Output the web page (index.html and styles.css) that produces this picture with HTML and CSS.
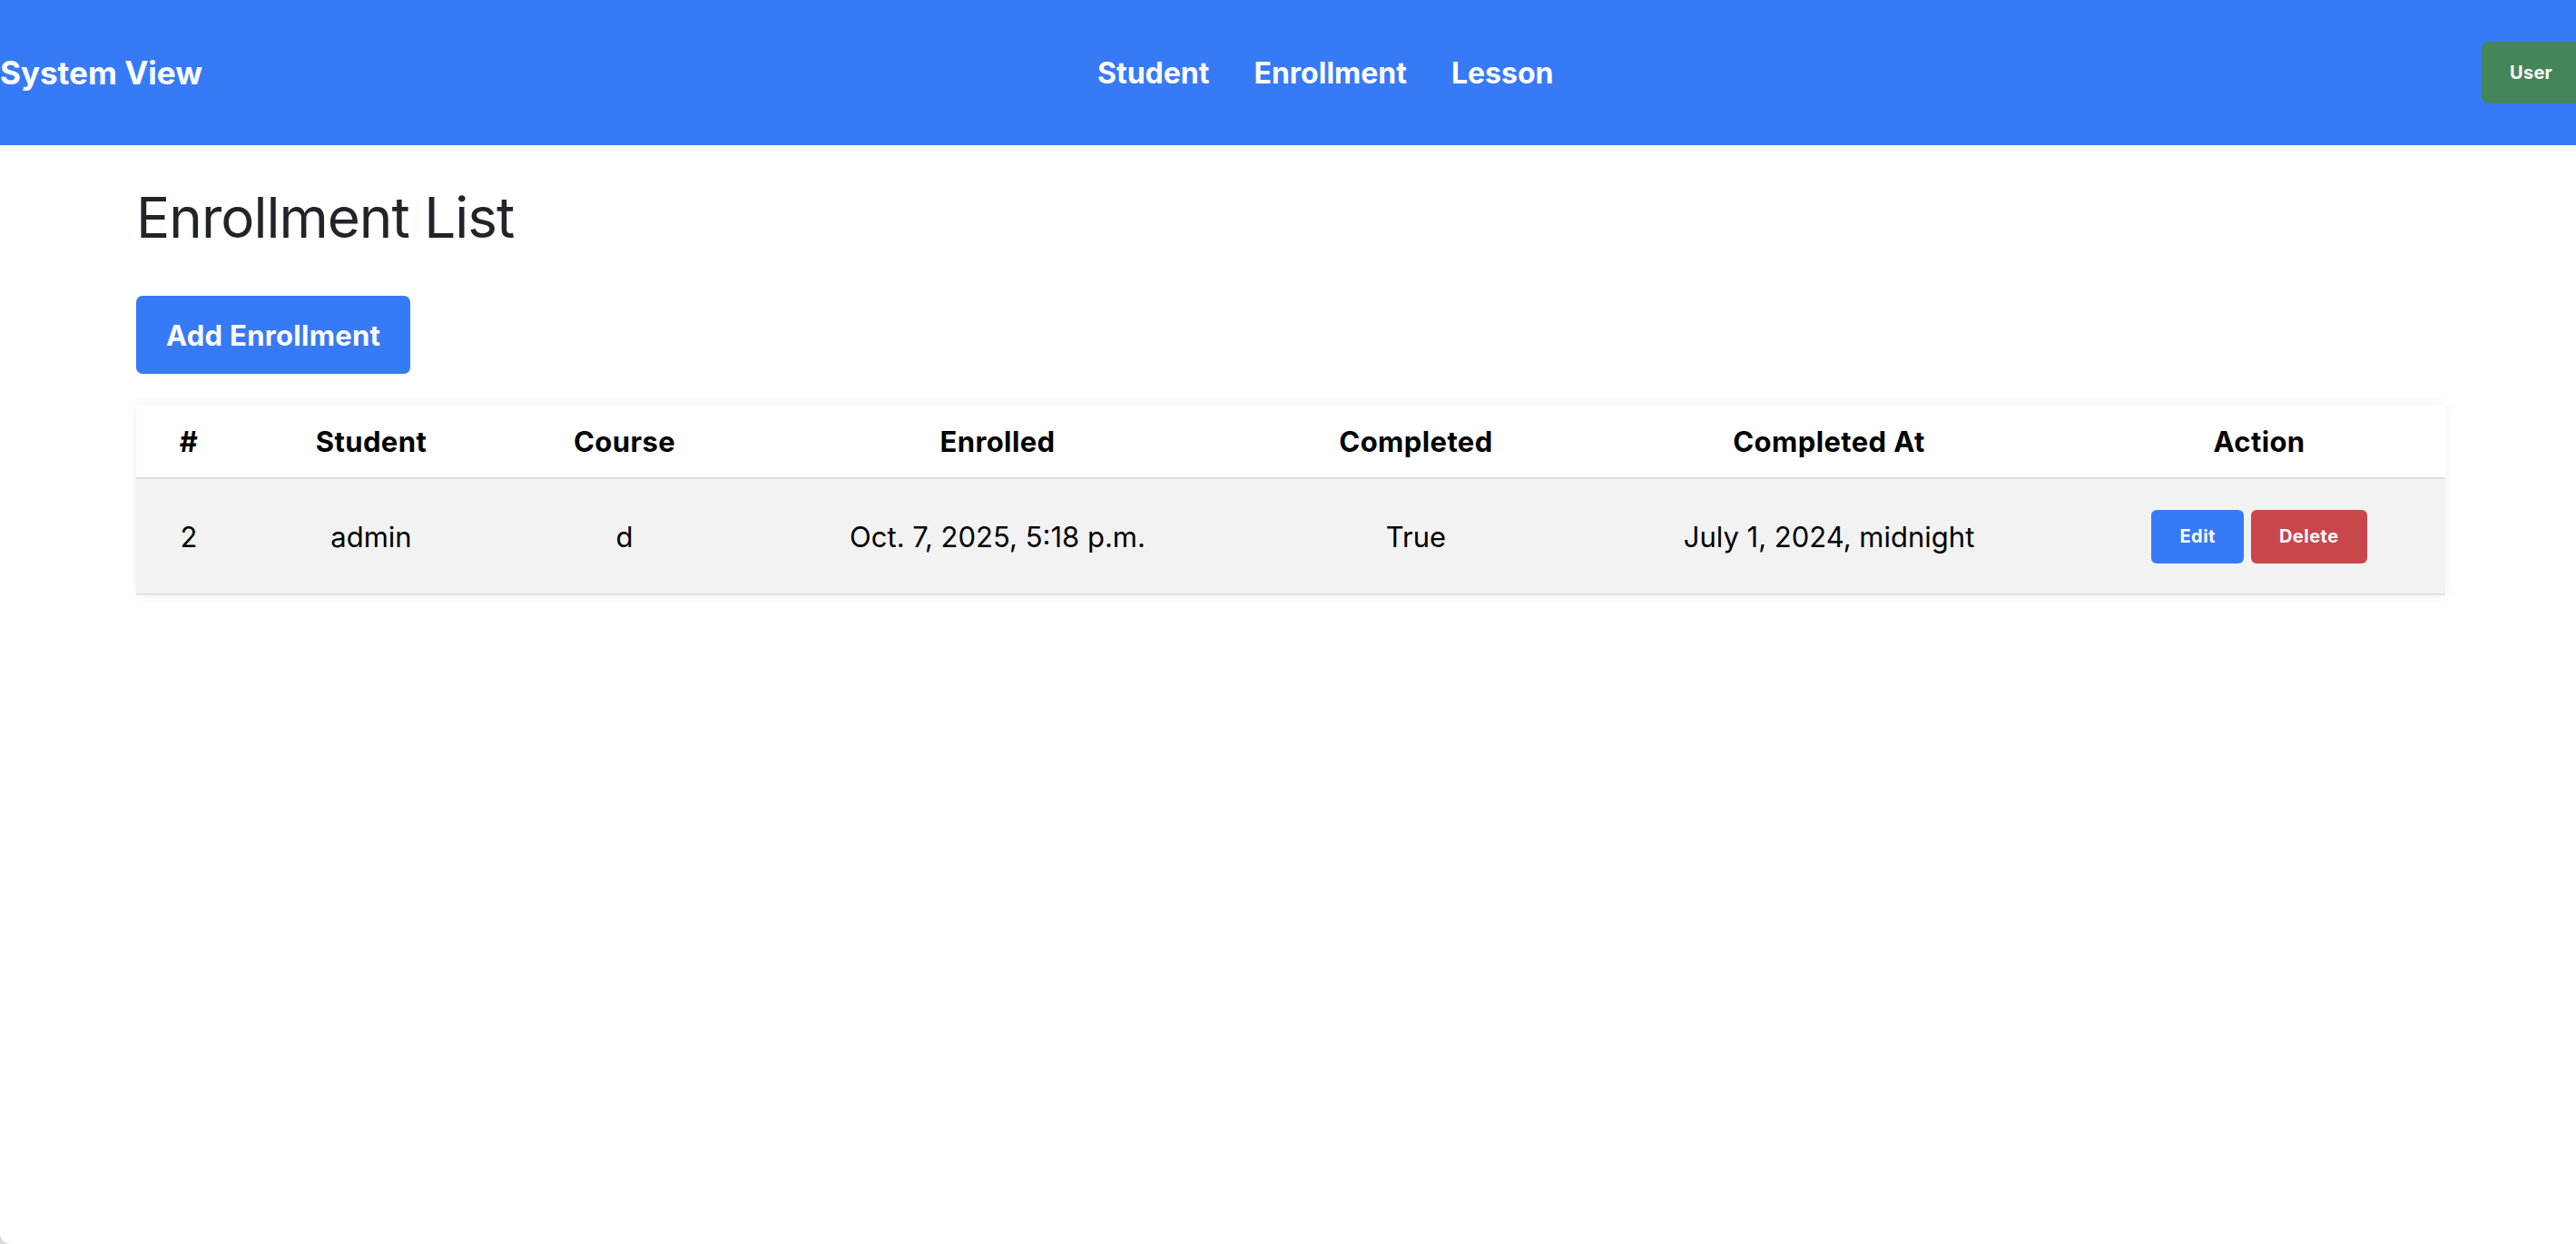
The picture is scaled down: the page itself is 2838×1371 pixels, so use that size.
FILE: index.html
```html
<!DOCTYPE html>
<html lang="en">
<head>
<meta charset="utf-8">
<title>Enrollment List</title>
<link rel="stylesheet" href="styles.css">
</head>
<body>
<header class="topbar">
  <div class="brand">System View</div>
  <nav class="nav">
    <a class="nav-link" href="#">Student</a>
    <a class="nav-link" href="#">Enrollment</a>
    <a class="nav-link" href="#">Lesson</a>
  </nav>
  <button class="user-btn">User</button>
</header>
<main class="content">
  <h1 class="page-title">Enrollment List</h1>
  <button class="btn-add">Add Enrollment</button>
  <table class="list-table">
    <colgroup>
      <col class="c-id"><col class="c-student"><col class="c-course"><col class="c-enrolled"><col class="c-completed"><col class="c-completed-at"><col class="c-action">
    </colgroup>
    <thead>
      <tr>
        <th>#</th><th>Student</th><th>Course</th><th>Enrolled</th><th>Completed</th><th>Completed At</th><th>Action</th>
      </tr>
    </thead>
    <tbody>
      <tr>
        <td>2</td><td>admin</td><td>d</td><td>Oct. 7, 2025, 5:18 p.m.</td><td>True</td><td>July 1, 2024, midnight</td>
        <td><div class="actions"><button class="btn-sm btn-edit">Edit</button><button class="btn-sm btn-delete">Delete</button></div></td>
      </tr>
    </tbody>
  </table>
</main>
</body>
</html>
```

FILE: styles.css
```css
html {
  background: #d9d9d9;
}
body {
  margin: 0;
  min-height: 1371px;
  background: #ffffff;
  font-family: Inter, "Liberation Sans", sans-serif;
  color: #000;
  border-bottom-left-radius: 12px;
  overflow: hidden;
}
.topbar {
  height: 160px;
  background: #377af6;
  display: grid;
  grid-template-columns: 1209px auto 1fr;
  align-items: center;
}
.brand {
  color: #fff;
  font-weight: 700;
  font-size: 35px;
  letter-spacing: 0;
}
.nav {
  display: flex;
  gap: 49px;
}
.nav-link {
  color: #fff;
  font-weight: 700;
  font-size: 32px;
  text-decoration: none;
  letter-spacing: 0;
}
.user-btn {
  justify-self: end;
  margin-right: -5px;
  width: 109px;
  height: 68px;
  background: #45855a;
  color: #fff;
  border: none;
  border-radius: 8px;
  font-family: inherit;
  font-weight: 700;
  font-size: 20px;
  letter-spacing: 0.3px;
  padding: 0;
}
.content {
  padding: 43px 145px 0 150px;
}
.page-title {
  margin: 0;
  font-size: 62px;
  font-weight: 400;
  line-height: 1.2;
  color: #212529;
  letter-spacing: -1px;
}
.btn-add {
  margin-top: 49px;
  display: block;
  height: 86px;
  padding: 0 33px;
  background: #377af6;
  color: #fff;
  border: none;
  border-radius: 7px;
  font-family: inherit;
  font-weight: 700;
  font-size: 31px;
  letter-spacing: 0.3px;
}
.list-table {
  margin-top: 34px;
  width: 100%;
  table-layout: fixed;
  border-collapse: collapse;
  box-shadow: 0 0 12px rgba(0, 0, 0, 0.06);
}
.c-id { width: 116px; }
.c-student { width: 286px; }
.c-course { width: 272px; }
.c-enrolled { width: 550px; }
.c-completed { width: 372px; }
.c-completed-at { width: 538px; }
.c-action { width: 410px; }
.list-table th {
  height: 80px;
  padding: 0;
  background: #fff;
  font-size: 31px;
  font-weight: 700;
  text-align: center;
  border-bottom: 2px solid #dedee3;
  letter-spacing: 0.4px;
}
.list-table td {
  height: 126px;
  padding: 0;
  background: #f2f2f2;
  font-size: 31px;
  font-weight: 400;
  text-align: center;
  border-bottom: 2px solid #dfdfe3;
  letter-spacing: 0;
}
.actions {
  display: flex;
  justify-content: center;
  gap: 8px;
}
.btn-sm {
  height: 59px;
  padding: 0 31px;
  border: none;
  border-radius: 6px;
  color: #fff;
  font-family: inherit;
  font-weight: 700;
  font-size: 20px;
  letter-spacing: 0.5px;
}
.btn-edit { background: #377af6; }
.btn-delete { background: #c9464b; }
```
